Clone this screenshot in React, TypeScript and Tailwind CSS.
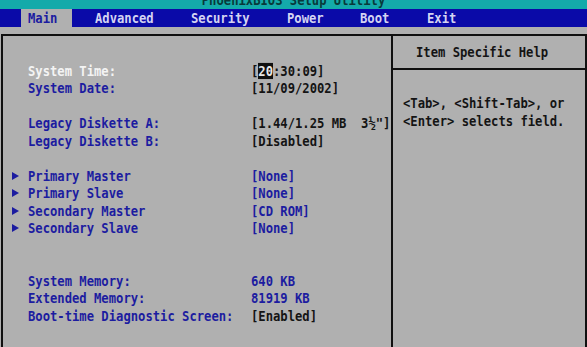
const FONT = { fontFamily: '"DejaVu Sans Mono", "Liberation Mono", monospace' };

type Row =
  | { kind: 'gap' }
  | { kind: 'item'; label: string; value?: React.ReactNode; arrow?: boolean; active?: boolean; valueBlue?: boolean };

const ROWS: Row[] = [
  { kind: 'item', label: 'System Time:', active: true, value: <TimeValue /> },
  { kind: 'item', label: 'System Date:', value: '[11/09/2002]' },
  { kind: 'gap' },
  { kind: 'item', label: 'Legacy Diskette A:', value: '[1.44/1.25 MB  3½"]' },
  { kind: 'item', label: 'Legacy Diskette B:', value: '[Disabled]' },
  { kind: 'gap' },
  { kind: 'item', label: 'Primary Master', arrow: true, value: '[None]', valueBlue: true },
  { kind: 'item', label: 'Primary Slave', arrow: true, value: '[None]', valueBlue: true },
  { kind: 'item', label: 'Secondary Master', arrow: true, value: '[CD ROM]', valueBlue: true },
  { kind: 'item', label: 'Secondary Slave', arrow: true, value: '[None]', valueBlue: true },
  { kind: 'gap' },
  { kind: 'gap' },
  { kind: 'item', label: 'System Memory:', value: '640 KB', valueBlue: true },
  { kind: 'item', label: 'Extended Memory:', value: '81919 KB', valueBlue: true },
  { kind: 'item', label: 'Boot-time Diagnostic Screen:', value: '[Enabled]' },
];

function TimeValue() {
  return (
    <span>
      [<span className="bg-[#101010] text-[#e8e8e8]">20</span>:30:09]
    </span>
  );
}

function Arrow() {
  return (
    <svg width="7" height="8" viewBox="0 0 7 8">
      <path d="M0 0 L7 4 L0 8 Z" fill="#1c1ca0" />
    </svg>
  );
}

const TABS = [
  { name: 'Advanced', w: 'w-[119px] pl-[23px]' },
  { name: 'Security', w: 'w-[96px]' },
  { name: 'Power', w: 'w-[73px]' },
  { name: 'Boot', w: 'w-[67px]' },
  { name: 'Exit', w: 'w-[80px]' },
];

export default function App() {
  return (
    <div
      className="w-[587px] h-[347px] overflow-hidden bg-[#b0b0b0] text-[12.2px] font-bold leading-none whitespace-pre"
      style={FONT}
    >
      {/* title bar, top half cut off as in the capture */}
      <div className="h-[9px] overflow-hidden bg-[#14aaaa]">
        <div className="-mt-[9px] h-[18px] flex items-center justify-center text-[#083a3a] scale-y-[1.15]">
          PhoenixBIOS Setup Utility
        </div>
      </div>

      {/* menu bar */}
      <div className="h-[18px] bg-[#0a0aa8] flex items-stretch pl-[21px] text-[#d4d4f2]">
        <div className="w-[51px] pl-[7px] bg-[#b0b0b0] text-[#1c1ca0] flex items-center">
          <span className="inline-block scale-y-[1.15]">Main</span>
        </div>
        {TABS.map(t => (
          <div key={t.name} className={`${t.w} flex items-center`}>
            <span className="inline-block scale-y-[1.15]">{t.name}</span>
          </div>
        ))}
      </div>

      {/* frame */}
      <div className="mt-[7px] ml-px h-[400px] border-2 border-[#101010] flex">
        <div className="w-[390px] pt-[26px] pl-[9px] border-r-2 border-[#101010]">
          {ROWS.map((r, i) =>
            r.kind === 'gap' ? (
              <div key={i} className="h-[17.5px]" />
            ) : (
              <div key={i} className="h-[17.5px] flex items-center">
                <div className="w-[16px] flex items-center">{r.arrow && <Arrow />}</div>
                <div className={`w-[223px] scale-y-[1.15] origin-left ${r.active ? 'text-[#f4f4f4]' : 'text-[#1c1ca0]'}`}>
                  {r.label}
                </div>
                <div className={`scale-y-[1.15] ${r.valueBlue ? 'text-[#1c1ca0]' : 'text-[#141414]'}`}>{r.value}</div>
              </div>
            )
          )}
        </div>
        <div className="flex-1 flex flex-col">
          <div className="h-[34px] border-b-2 border-[#101010] flex items-center pl-[23px] text-[#141414]">
            <span className="inline-block scale-y-[1.15]">Item Specific Help</span>
          </div>
          <div className="pt-[24px] pl-[10px] text-[#141414]">
            <div className="h-[17.5px] flex items-center scale-y-[1.15]">&lt;Tab&gt;, &lt;Shift-Tab&gt;, or</div>
            <div className="h-[17.5px] flex items-center scale-y-[1.15]">&lt;Enter&gt; selects field.</div>
          </div>
        </div>
      </div>
    </div>
  );
}
